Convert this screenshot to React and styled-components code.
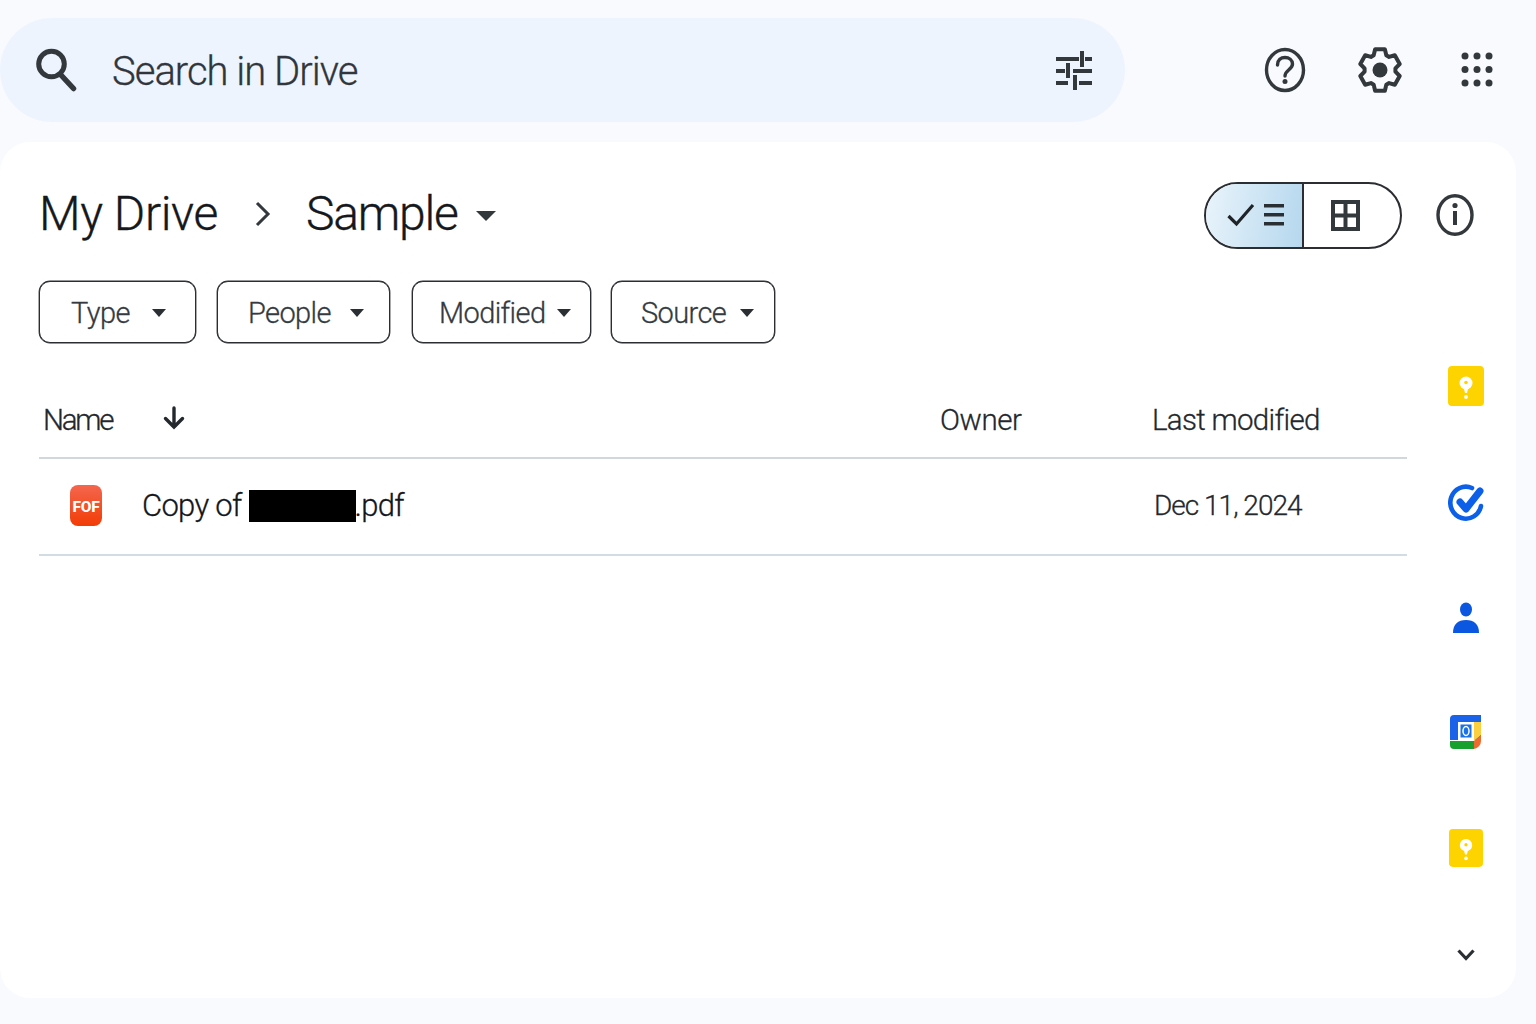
import React from 'react';
import styled, { createGlobalStyle } from 'styled-components';

const Global = createGlobalStyle`
  html, body { margin: 0; padding: 0; background: #f8fafe; }
  body { font-family: "Roboto", "Liberation Sans", sans-serif; width: 1536px; height: 1024px; overflow: hidden; }
`;
const Page = styled.div`
  width: 1536px; height: 1024px; padding-top: 18px; box-sizing: border-box;
  display: flex; flex-direction: column; gap: 20px;
`;
const TopBar = styled.header`display: flex; align-items: center; height: 104px;`;
const SearchBar = styled.div`
  width: 1125px; height: 104px; background: #eef4fe; border-radius: 52px;
  display: flex; align-items: center; box-sizing: border-box; padding: 0 33px 0 36px;
`;
const SearchText = styled.span`
  margin-left: 35px; flex: 1; font-size: 40px; letter-spacing: -1px; color: #30363b; font-weight: 300;
  -webkit-text-stroke: 0.3px #30363b; padding-top: 2px;
`;
const TopIcons = styled.div`display: flex; align-items: center; padding-left: 139px;`;
const TopIcon = styled.span`display: flex; margin-left: ${p => p.$ml || 0}px;`;
const Card = styled.main`
  width: 1516px; height: 856px; background: #fff; border-radius: 30px;
  box-sizing: border-box; padding: 40px 0 0 39px; display: flex; flex-direction: column;
`;
const HeaderRow = styled.div`display: flex; align-items: center; height: 66px;`;
const Crumb = styled.h1`
  margin: 0 0 2px; font-size: 48px; font-weight: 300; color: #15181c; letter-spacing: ${p => p.$ls}px; line-height: 64px;
  -webkit-text-stroke: 0.35px #15181c; white-space: nowrap;
`;
const CrumbSep = styled.span`display: flex; margin: 0 35px 3px 37px;`;
const Caret = styled.span`
  width: 0; height: 0; border-left: ${p => p.$s}px solid transparent; border-right: ${p => p.$s}px solid transparent;
  border-top: ${p => p.$s}px solid #33383d; margin-left: ${p => p.$ml}px; margin-top: 2px;
`;
const Toggle = styled.div`
  margin-left: auto; width: 198px; height: 67px; border: 2px solid #2a2e33; border-radius: 34px; box-sizing: border-box;
  display: flex; overflow: hidden;
`;
const ToggleOn = styled.div`
  width: 98px; background: linear-gradient(100deg, #e9f4fb, #b5d7ee); border-right: 2px solid #2a2e33;
  display: flex; align-items: center; justify-content: center; gap: 9px; box-sizing: border-box; padding-left: 3px;
`;
const ToggleOff = styled.div`flex: 1; display: flex; align-items: center; padding-left: 27px;`;
const InfoSlot = styled.div`display: flex; margin: 0 42px 0 34px;`;
const Body = styled.div`display: flex; margin-top: 33px; flex: 1;`;
const Main = styled.div`width: 1368px; display: flex; flex-direction: column;`;
const Filters = styled.div`display: flex;`;
const Chip = styled.button`
  height: 62px; width: ${p => p.$w}px; margin-left: ${p => p.$ml}px; background: #fff; border: 1px solid #2a2e33;
  box-shadow: 0 0 0 0.4px #2a2e33; border-radius: 11px; padding: 0 0 0 ${p => p.$pl}px;
  box-sizing: border-box; display: flex; align-items: center; font-family: inherit; font-size: 29px; color: #343a40;
  font-weight: 300; -webkit-text-stroke: 0.3px #343a40;
`;
const ChipLabel = styled.span`flex: 1; text-align: left; letter-spacing: -0.6px; white-space: nowrap; padding-top: 2px;`;
const ChipCaret = styled.span`display: flex; margin: 2px ${p => p.$mr}px 0 0;`;
const TableHead = styled.div`
  display: grid; grid-template-columns: 901px 212px 1fr; height: 116px; align-items: end;
  border-bottom: 2px solid #d2d7db; box-sizing: border-box; padding-bottom: 17px;
`;
const HeadCell = styled.div`
  font-size: 29.5px; color: #23282d; padding-left: ${p => p.$pl || 0}px; display: flex; align-items: center; font-weight: 300;
  -webkit-text-stroke: 0.3px #23282d; letter-spacing: ${p => p.$ls}px; white-space: nowrap; line-height: 40px;
`;
const SortIcon = styled.span`display: flex; margin-left: 51px; margin-top: -4px;`;
const Row = styled.div`
  display: grid; grid-template-columns: 1115px 1fr; height: 97px; align-items: center;
  border-bottom: 2px solid #d3dce2; box-sizing: border-box; padding-bottom: 2px;
`;
const NameCell = styled.div`
  display: flex; align-items: center; padding-left: 31px; font-size: 31px; color: #14171a; font-weight: 300;
  -webkit-text-stroke: 0.3px #14171a; letter-spacing: -0.7px;
`;
const FileIcon = styled.div`
  width: 32px; height: 41px; border-radius: 8px; background: linear-gradient(180deg, #f4664e, #f23c05);
  color: #fff; display: flex; align-items: center; justify-content: center; font-family: "Roboto", sans-serif; font-weight: 800; font-size: 15.5px;
  letter-spacing: -0.2px; margin-right: 40px; -webkit-text-stroke: 0; padding-top: 3px; box-sizing: border-box;
`;
const Redacted = styled.span`display: inline-block; width: 107px; height: 32px; background: #000; margin: 0 -1px 0 7px;`;
const DateCell = styled.div`
  font-size: 28px; color: #23282d; font-weight: 300; -webkit-text-stroke: 0.3px #23282d; letter-spacing: -1px;
`;
const Rail = styled.aside`
  width: 36px; margin-left: 41px; display: flex; flex-direction: column; align-items: center;
`;
const RailItem = styled.div`height: 44px; display: flex; align-items: center; justify-content: center; margin-top: ${p => p.$mt}px;`;

const Search = () => (
  <svg width="41" height="44" viewBox="0 0 41 44" fill="none" stroke="#33383d" strokeLinecap="round">
    <circle cx="15.500" cy="16" r="12.800" strokeWidth="5" />
    <path d="M25 27 L37.500 40.500" strokeWidth="5.500" />
  </svg>
);
const Tune = () => (
  <svg width="36" height="40" viewBox="0 0 36 40" fill="#33383d">
    <path d="M0 7h23v4H0zM24 1h4v16h-4zM29 7h7v4h-7zM0 19h9v4H0zM10 13h4v15h-4zM17 19h19v4H17zM0 31h12v4H0zM17 25h4v15h-4zM23 31h13v4H23z" />
  </svg>
);
const Help = () => (
  <svg width="42" height="46" viewBox="0 0 42 46" fill="none" stroke="#33383d">
    <ellipse cx="21" cy="23" rx="18.500" ry="20.500" strokeWidth="3.400" />
    <path d="M13.500 18c0-5 3.500-7.500 7.500-7.500s7.500 2.500 7.500 6.500c0 5.500-7.500 6-7.500 12" strokeWidth="3.400" strokeLinecap="round" />
    <circle cx="21" cy="34.500" r="2.500" fill="#33383d" stroke="none" />
  </svg>
);
const gearPath = (() => {
  const pts = [];
  for (let i = 0; i < 6; i++) {
    const a = (i * 60 - 90) * Math.PI / 180;
    const at = (r, d) => `${(22 + r * Math.cos(a + d)).toFixed(2)} ${(23 + r * 1.04 * Math.sin(a + d)).toFixed(2)}`;
    pts.push(at(15.500, -0.42), at(20.500, -0.24), at(20.500, 0.24), at(15.500, 0.42));
  }
  return `M${pts.join('L')}z`;
})();
const Gear = () => (
  <svg width="44" height="46" viewBox="0 0 44 46" fill="none" stroke="#33383d">
    <path d={gearPath} strokeWidth="4" strokeLinejoin="round" />
    <circle cx="22" cy="23" r="7.500" fill="#33383d" stroke="none" />
  </svg>
);
const Apps = () => (
  <svg width="32" height="36" viewBox="0 0 32 36" fill="#33383d">
    {[4, 17.500, 31].map(y => [4, 16, 28].map(x => <circle key={`${x}-${y}`} cx={x} cy={y} r="3.500" />))}
  </svg>
);
const Chevron = () => (
  <svg width="16" height="26" viewBox="0 0 16 26" fill="none" stroke="#33383d" strokeWidth="3">
    <path d="M2 2l11 11L2 24" />
  </svg>
);
const Check = () => (
  <svg width="28" height="24" viewBox="0 0 28 24" fill="none" stroke="#1f2428" strokeWidth="3.200">
    <path d="M1.500 13l8 8L26 2" />
  </svg>
);
const Lines = () => (
  <svg width="20" height="22" viewBox="0 0 20 22" fill="#2a2f34">
    <path d="M0 0h20v3.400H0zM0 9h20v3.400H0zM0 18h20v3.400H0z" />
  </svg>
);
const GridIcon = () => (
  <svg width="29" height="31" viewBox="0 0 29 31" fill="none" stroke="#33383d" strokeWidth="4">
    <rect x="2" y="2" width="25" height="27" />
    <path d="M14.500 2v27M2 15.500h25" />
  </svg>
);
const Info = () => (
  <svg width="38" height="42" viewBox="0 0 38 42" fill="none" stroke="#33383d">
    <ellipse cx="19" cy="21" rx="17" ry="19.200" strokeWidth="3.400" />
    <path d="M19 17v14" strokeWidth="4" />
    <circle cx="19" cy="11.500" r="2.600" fill="#33383d" stroke="none" />
  </svg>
);
const SmallCaret = () => (
  <svg width="14" height="8" viewBox="0 0 14 8" fill="#2a2f34"><path d="M0 0h14L7 8z" /></svg>
);
const Arrow = () => (
  <svg width="22" height="24" viewBox="0 0 22 24" fill="none" stroke="#23282d" strokeWidth="3.400" strokeLinecap="round">
    <path d="M11 2v19M2.500 12.500L11 21l8.500-8.500" />
  </svg>
);
const Keep = ({ w = 36, h = 40 }) => (
  <svg width={w} height={h} viewBox="0 0 36 40">
    <rect width="36" height="40" rx="4" fill="#fdd400" />
    <circle cx="18" cy="17" r="6.500" fill="#fff" />
    <circle cx="18" cy="16.500" r="1.800" fill="#fdd400" />
    <path d="M15.500 21h5l-1.500 6h-2z" fill="#fff" />
    <circle cx="18" cy="31" r="1.900" fill="#fff" />
  </svg>
);
const Tasks = () => (
  <svg width="36" height="40" viewBox="0 0 36 40" fill="none" stroke="#0b5fe8">
    <path d="M33 24a15.500 16 0 1 1-9-18" strokeWidth="4.600" strokeLinecap="round" />
    <path d="M12 20l6 7L32 9" strokeWidth="7" strokeLinejoin="round" strokeLinecap="round" />
  </svg>
);
const Contacts = () => (
  <svg width="28" height="32" viewBox="0 0 28 32" fill="#0b57e0">
    <ellipse cx="14" cy="7.500" rx="6" ry="7" />
    <path d="M1 31c0-9 5-13 13-13s13 4 13 13z" />
  </svg>
);
const Calendar = () => (
  <svg width="32" height="36" viewBox="0 0 32 36">
    <path d="M4 1h27v25H0V5a4 4 0 0 1 4-4z" fill="#1a62ea" />
    <path d="M0 27h24v8H4a4 4 0 0 1-4-4z" fill="#18a02e" />
    <path d="M24 8h7v13l-7 6z" fill="#fbd040" />
    <path d="M24 27l7-6v6a8 8 0 0 1-7 8z" fill="#ee6a2f" />
    <rect x="8" y="8" width="16" height="18" fill="#fff" />
    <rect x="10.500" y="10.500" width="11" height="13" fill="#1a72e8" />
    <ellipse cx="16" cy="17" rx="3" ry="4.500" fill="none" stroke="#fff" strokeWidth="1.500" />
  </svg>
);
const ChevronDown = () => (
  <svg width="18" height="12" viewBox="0 0 18 12" fill="none" stroke="#2a2f34" strokeWidth="3.200">
    <path d="M1.500 1.500L9 9.500l7.500-8" />
  </svg>
);

const filters = [
  { label: 'Type', w: 157, pl: 31, mr: 29, ml: 0 },
  { label: 'People', w: 173, pl: 30, mr: 25, ml: 21 },
  { label: 'Modified', w: 179, pl: 26, mr: 19, ml: 22 },
  { label: 'Source', w: 164, pl: 29, mr: 20, ml: 20 },
];

export default function App() {
  return (
    <Page>
      <Global />
      <TopBar>
        <SearchBar>
          <Search />
          <SearchText>Search in Drive</SearchText>
          <Tune />
        </SearchBar>
        <TopIcons>
          <TopIcon><Help /></TopIcon>
          <TopIcon $ml={52}><Gear /></TopIcon>
          <TopIcon $ml={59}><Apps /></TopIcon>
        </TopIcons>
      </TopBar>
      <Card>
        <HeaderRow>
          <Crumb $ls={-0.4}>My Drive</Crumb>
          <CrumbSep><Chevron /></CrumbSep>
          <Crumb $ls={-1.2}>Sample</Crumb>
          <Caret $s={10} $ml={18} />
          <Toggle>
            <ToggleOn><Check /><Lines /></ToggleOn>
            <ToggleOff><GridIcon /></ToggleOff>
          </Toggle>
          <InfoSlot><Info /></InfoSlot>
        </HeaderRow>
        <Body>
          <Main>
            <Filters>
              {filters.map(f => (
                <Chip key={f.label} $w={f.w} $pl={f.pl} $ml={f.ml}>
                  <ChipLabel>{f.label}</ChipLabel>
                  <ChipCaret $mr={f.mr}><SmallCaret /></ChipCaret>
                </Chip>
              ))}
            </Filters>
            <TableHead>
              <HeadCell $pl={4} $ls={-2.2}>Name<SortIcon><Arrow /></SortIcon></HeadCell>
              <HeadCell $ls={-0.4}>Owner</HeadCell>
              <HeadCell $ls={-0.7}>Last modified</HeadCell>
            </TableHead>
            <Row>
              <NameCell>
                <FileIcon>FOF</FileIcon>
                Copy of<Redacted />.pdf
              </NameCell>
              <DateCell>Dec 11, 2024</DateCell>
            </Row>
          </Main>
          <Rail>
            <RailItem $mt={83}><Keep /></RailItem>
            <RailItem $mt={72}><Tasks /></RailItem>
            <RailItem $mt={72}><Contacts /></RailItem>
            <RailItem $mt={70}><Calendar /></RailItem>
            <RailItem $mt={72}><Keep w={34} h={38} /></RailItem>
            <RailItem $mt={63}><ChevronDown /></RailItem>
          </Rail>
        </Body>
      </Card>
    </Page>
  );
}
